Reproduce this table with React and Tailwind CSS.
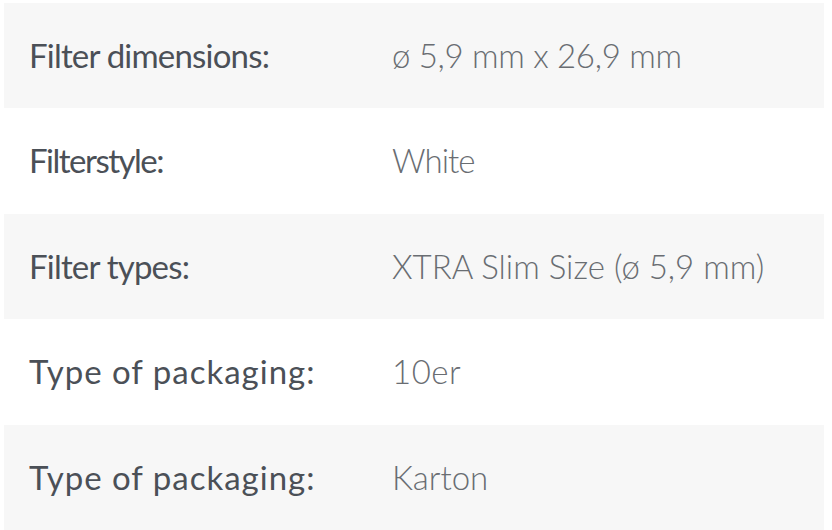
import React from 'react'

// label tracking is tuned per row to follow the narrow/wide letters of the original face
const rows = [
  { label: 'Filter dimensions:', value: 'ø 5,9 mm x 26,9 mm', track: 'tracking-[-0.8px]', vtrack: 'tracking-[-0.3px]' },
  { label: 'Filterstyle:', value: 'White', track: 'tracking-[-1.5px]', vtrack: 'tracking-[-1px]' },
  { label: 'Filter types:', value: 'XTRA Slim Size (ø 5,9 mm)', track: 'tracking-[-0.8px]', vtrack: 'tracking-[0px]' },
  { label: 'Type of packaging:', value: '10er', track: 'tracking-[1px]', vtrack: 'tracking-[0.5px]' },
  { label: 'Type of packaging:', value: 'Karton', track: 'tracking-[1px]', vtrack: 'tracking-[0px]' },
]

export default function App() {
  return (
    <div className="w-[832px] h-[530px] bg-white pt-[3px] pl-[4px] pr-[8px] font-['Lato',sans-serif]">
      {rows.map((row, i) => (
        <div
          key={i}
          className={`flex items-center h-[105.4px] ${i % 2 === 0 ? 'bg-[#f7f7f7]' : 'bg-white'}`}
        >
          <div className={`w-[388px] pl-[25px] text-[33px] text-[#4b5057] ${row.track}`}>
            {row.label}
          </div>
          <div className={`text-[33px] text-[#696d72] font-light ${row.vtrack}`}>
            {row.value}
          </div>
        </div>
      ))}
    </div>
  )
}
